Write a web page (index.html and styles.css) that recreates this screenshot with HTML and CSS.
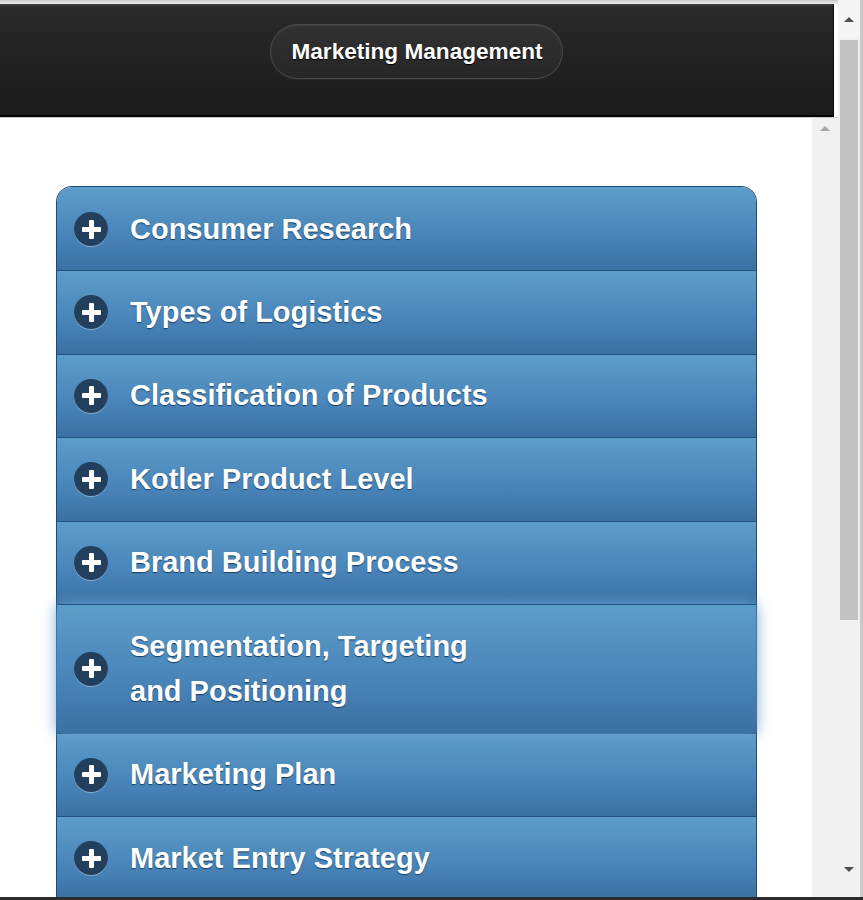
FILE: index.html
```html
<!DOCTYPE html>
<html lang="en">
<head>
<meta charset="utf-8">
<title>Marketing Management</title>
<link rel="stylesheet" href="styles.css">
</head>
<body>
<div class="frame">
  <div class="viewport">
    <div class="topstrip"></div>
    <header class="bar">
      <h1 class="title">Marketing Management</h1>
    </header>
    <div class="body-row">
      <main class="content">
        <ul class="list">
          <li class="item"><span class="plus"></span><span class="label">Consumer Research</span></li>
          <li class="item"><span class="plus"></span><span class="label">Types of Logistics</span></li>
          <li class="item"><span class="plus"></span><span class="label">Classification of Products</span></li>
          <li class="item"><span class="plus"></span><span class="label">Kotler Product Level</span></li>
          <li class="item"><span class="plus"></span><span class="label">Brand Building Process</span></li>
          <li class="item focus"><span class="plus"></span><span class="label">Segmentation, Targeting<br>and Positioning</span></li>
          <li class="item"><span class="plus"></span><span class="label">Marketing Plan</span></li>
          <li class="item"><span class="plus"></span><span class="label">Market Entry Strategy</span></li>
        </ul>
      </main>
      <div class="inner-scroll"><span class="arrow-up light"></span></div>
    </div>
  </div>
  <div class="scrollbar">
    <div class="sb-btn"><span class="arrow-up"></span></div>
    <div class="sb-thumb"></div>
    <div class="sb-track"></div>
    <div class="sb-btn"><span class="arrow-down"></span></div>
  </div>
</div>
</body>
</html>
```

FILE: styles.css
```css
html, body {
  margin: 0;
  padding: 0;
  height: 900px;
  overflow: hidden;
  background: #ffffff;
}

.frame {
  display: flex;
  height: 897px;
  border-bottom: 3px solid #2c2c2c;
  font-family: "Liberation Sans", Arial, sans-serif;
}

.viewport {
  width: 838px;
  display: flex;
  flex-direction: column;
  overflow: hidden;
}

.topstrip {
  height: 4px;
  background: linear-gradient(#c9c9c9, #efefef);
  flex: none;
}

.bar {
  flex: none;
  width: 834px;
  height: 113px;
  box-sizing: border-box;
  border-top: 2px solid #3b3b3b;
  border-bottom: 2px solid #050505;
  border-right: 1px solid #0a0a0a;
  background: linear-gradient(#2a2a2a, #1a1a1a);
  display: flex;
  justify-content: center;
  align-items: flex-start;
  padding-top: 18px;
}

.title {
  margin: 0;
  height: 55px;
  box-sizing: border-box;
  padding: 0 19px 0 20px;
  display: flex;
  align-items: center;
  border-radius: 28px;
  border: 1px solid #4a4a4a;
  background: linear-gradient(#323232, #262626);
  box-shadow: inset 0 1px 0 rgba(255,255,255,0.08), 0 1px 0 rgba(255,255,255,0.05);
  color: #ffffff;
  font-size: 22.6px;
  font-weight: bold;
  text-shadow: 0 1px 1px #000;
}

.body-row {
  flex: 1;
  display: flex;
  border-top: 1px solid #c8c8c8;
  min-height: 0;
}

.content {
  flex: 1;
  padding: 68px 55px 0 56px;
  overflow: hidden;
}

.list {
  list-style: none;
  margin: 0;
  padding: 0;
  border: 1px solid #1d4a75;
  border-bottom: none;
  border-radius: 16px 16px 0 0;
}

.item {
  display: flex;
  align-items: center;
  padding: 18.75px 0 18.75px 17px;
  border-top: 1px solid #21527f;
  background: linear-gradient(#5d9dca, #4a86ba 55%, #3b70a4);
  color: #ffffff;
  font-size: 29px;
  font-weight: bold;
  line-height: 45px;
  text-shadow: 0 1px 1px #173e63;
}

.item:first-child {
  border-top: none;
  border-radius: 15px 15px 0 0;
  padding-top: 19.75px;
  padding-bottom: 18.25px;
}

.focus {
  position: relative;
  z-index: 1;
  box-shadow: 0 0 14px #6ea2d4;
}

.plus {
  flex: none;
  position: relative;
  width: 34px;
  height: 34px;
  border-radius: 50%;
  background: #22405e;
  box-shadow: 0 1px 0 rgba(255,255,255,0.35);
  margin-right: 22px;
}

.plus::before,
.plus::after {
  content: "";
  position: absolute;
  left: 50%;
  top: 50%;
  background: #ffffff;
  border-radius: 1px;
}

.plus::before {
  width: 19px;
  height: 5px;
  margin: -2.5px 0 0 -9.5px;
}

.plus::after {
  width: 5px;
  height: 19px;
  margin: -9.5px 0 0 -2.5px;
}

.inner-scroll {
  width: 26px;
  flex: none;
  background: #f1f1f1;
  display: flex;
  justify-content: center;
  padding-top: 8px;
  box-sizing: border-box;
}

.scrollbar {
  width: 22px;
  flex: none;
  display: flex;
  flex-direction: column;
  background: #f1f1f1;
  border-right: 3px solid #c9c9c9;
}

.sb-btn {
  height: 38px;
  display: flex;
  justify-content: center;
  align-items: center;
  background: #f5f5f5;
  flex: none;
}

.sb-btn:last-child {
  height: 30px;
  background: #f1f1f1;
  align-items: flex-start;
  padding-top: 4px;
}

.sb-thumb {
  height: 580px;
  margin: 2px 2px 0 2px;
  background: #c2c2c2;
  flex: none;
}

.sb-track {
  flex: 1;
}

.arrow-up {
  width: 0;
  height: 0;
  border-left: 5px solid transparent;
  border-right: 5px solid transparent;
  border-bottom: 5px solid #4e4e4e;
}

.arrow-up.light {
  border-bottom-color: #a5a5a5;
}

.arrow-down {
  width: 0;
  height: 0;
  border-left: 5px solid transparent;
  border-right: 5px solid transparent;
  border-top: 5px solid #4e4e4e;
}
```
